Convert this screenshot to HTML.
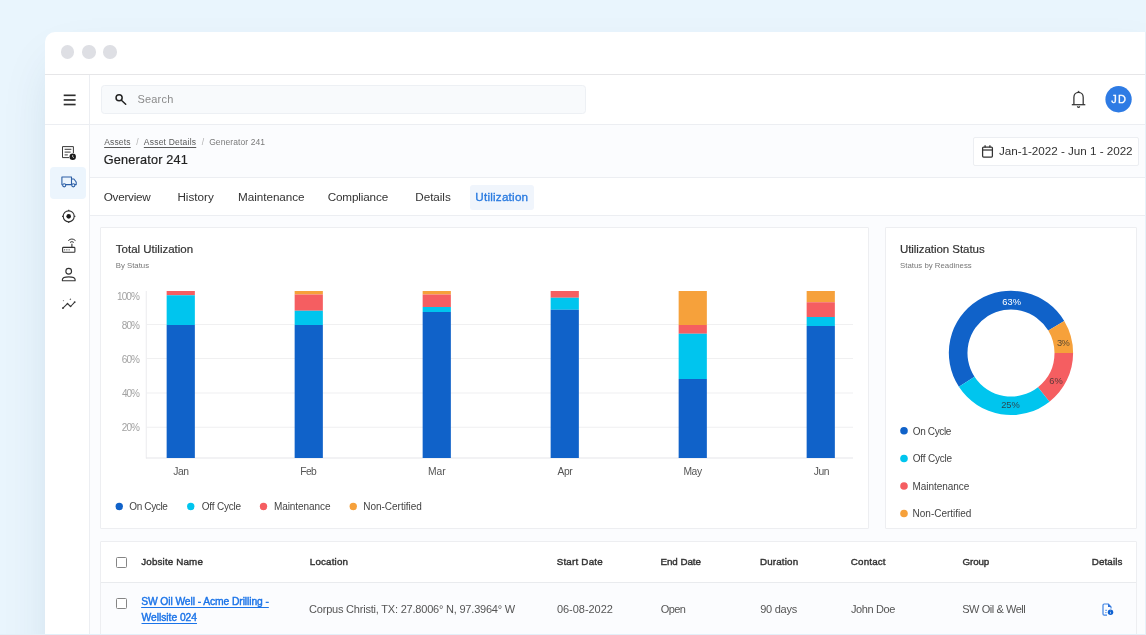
<!DOCTYPE html>
<html lang="en">
<head>
<meta charset="utf-8">
<title>Generator 241 - Utilization</title>
<style>
*{box-sizing:border-box;margin:0;padding:0}
html,body{width:1146px;height:635px;overflow:hidden}
body{position:relative;background:#e9f5fd;font-family:"Liberation Sans",sans-serif;color:#333}
.abs,.t{position:absolute}
.t{white-space:pre}
.texts{position:absolute;left:0;top:0;width:1146px;height:635px;z-index:5;will-change:transform}
.window{position:absolute;left:45px;top:32px;width:1120px;height:640px;background:#fff;border-radius:10px 0 0 0;
 box-shadow:0 25px 50px -12px rgba(20,60,100,.15)}
.edge-r{position:absolute;left:1145px;top:32px;width:1px;height:603px;background:#e6f1f9;z-index:20}
.edge-b{position:absolute;left:0;top:634px;width:1146px;height:1px;background:#e3eff8;z-index:20}
.dot{position:absolute;top:45.2px;width:13.4px;height:13.4px;border-radius:50%;background:#dedfe4}
.hl{position:absolute;height:1px;background:#eceef2}
.vl{position:absolute;width:1px;background:#eceef2}
.band{position:absolute;left:90px;width:1056px;background:#fbfcfe}
.search{position:absolute;left:101px;top:85px;width:484.5px;height:28.5px;background:#f8fafc;border:1px solid #edf0f4;border-radius:3.5px}
.datebtn{position:absolute;left:973px;top:137px;width:166px;height:29px;background:#fff;border:1px solid #eceef2;border-radius:2px}
.tabact{position:absolute;left:470px;top:184.5px;width:64px;height:25.5px;background:#f0f5fc;border-radius:3px}
.navact{position:absolute;left:50px;top:167px;width:35.5px;height:31.5px;background:#ecf5fd;border-radius:4px}
.card{position:absolute;background:#fff;border:1px solid #edeef1;border-radius:1px}
.cb{position:absolute;left:115.75px;width:11px;height:11px;border:1px solid #858585;border-radius:1.5px;background:#fff}
svg{position:absolute;left:0;top:0;overflow:visible}
</style>
</head>
<body>
<div class="window"></div>
<!-- traffic lights -->
<div class="dot" style="left:60.9px"></div><div class="dot" style="left:82.2px"></div><div class="dot" style="left:103.4px"></div>
<!-- bands / backgrounds -->
<div class="band" style="top:125px;height:52px"></div>
<div class="band" style="top:216px;height:419px"></div>
<!-- structural lines -->
<div class="hl" style="left:45px;top:74px;width:1101px;background:#e6e6e8"></div>
<div class="hl" style="left:45px;top:124.2px;width:1101px"></div>
<div class="hl" style="left:90px;top:176.5px;width:1056px"></div>
<div class="hl" style="left:90px;top:215.2px;width:1056px"></div>
<div class="vl" style="left:89px;top:75px;height:560px"></div>
<nav class="navact"></nav>
<!-- header -->
<header>
<div class="search"></div>
</header>
<div class="datebtn"></div>
<div class="tabact"></div>
<!-- cards -->
<section class="card" style="left:100px;top:227px;width:769px;height:302px"></section>
<section class="card" style="left:885px;top:227px;width:252px;height:302px"></section>
<section class="card" style="left:100px;top:541px;width:1037px;height:110px;background:#fbfcfe">
  <div style="position:absolute;left:0;top:0;width:1035px;height:41px;background:#fff;border-bottom:1px solid #e9ebee"></div>
</section>
<div class="cb" style="top:556.7px"></div>
<div class="cb" style="top:598.3px"></div>
<svg width="1146" height="635" viewBox="0 0 1146 635">
<rect x="146.5" y="324" width="706.5" height="1" fill="#f0f0f1"/>
<rect x="146.5" y="358" width="706.5" height="1" fill="#f0f0f1"/>
<rect x="146.5" y="392.5" width="706.5" height="1" fill="#f0f0f1"/>
<rect x="146.5" y="426.75" width="706.5" height="1" fill="#f0f0f1"/>
<rect x="145.75" y="291" width="1" height="167.5" fill="#ececee"/>
<rect x="146" y="457.5" width="707" height="1" fill="#e6e6e9"/>
<rect x="166.65" y="291" width="28.2" height="4.25" fill="#f55e61"/>
<rect x="166.65" y="295.25" width="28.2" height="29.75" fill="#00c5ee"/>
<rect x="166.65" y="325" width="28.2" height="133" fill="#1062c9"/>
<rect x="294.65" y="291" width="28.2" height="3.5" fill="#f6a13b"/>
<rect x="294.65" y="294.5" width="28.2" height="16.25" fill="#f55e61"/>
<rect x="294.65" y="310.75" width="28.2" height="14.25" fill="#00c5ee"/>
<rect x="294.65" y="325" width="28.2" height="133" fill="#1062c9"/>
<rect x="422.65" y="291" width="28.2" height="3.5" fill="#f6a13b"/>
<rect x="422.65" y="294.5" width="28.2" height="12.5" fill="#f55e61"/>
<rect x="422.65" y="307" width="28.2" height="5" fill="#00c5ee"/>
<rect x="422.65" y="312" width="28.2" height="146" fill="#1062c9"/>
<rect x="550.65" y="291" width="28.2" height="6.75" fill="#f55e61"/>
<rect x="550.65" y="297.75" width="28.2" height="12" fill="#00c5ee"/>
<rect x="550.65" y="309.75" width="28.2" height="148.25" fill="#1062c9"/>
<rect x="678.65" y="291" width="28.2" height="34" fill="#f6a13b"/>
<rect x="678.65" y="325" width="28.2" height="8.75" fill="#f55e61"/>
<rect x="678.65" y="333.75" width="28.2" height="45.25" fill="#00c5ee"/>
<rect x="678.65" y="379" width="28.2" height="79" fill="#1062c9"/>
<rect x="806.65" y="291" width="28.2" height="11.25" fill="#f6a13b"/>
<rect x="806.65" y="302.25" width="28.2" height="14.75" fill="#f55e61"/>
<rect x="806.65" y="317" width="28.2" height="9" fill="#00c5ee"/>
<rect x="806.65" y="326" width="28.2" height="132" fill="#1062c9"/>
<circle cx="1118.55" cy="99.25" r="13.15" fill="#2e7be4"/>
<circle cx="119.25" cy="506.5" r="3.7" fill="#1062c9"/>
<circle cx="190.75" cy="506.5" r="3.7" fill="#00c5ee"/>
<circle cx="263.5" cy="506.5" r="3.7" fill="#f55e61"/>
<circle cx="353.25" cy="506.5" r="3.7" fill="#f6a13b"/>
<path d="M958.92 386.82 A62.1 62.1 0 1 1 1064.23 321.02 L1048.29 330.60 A43.5 43.5 0 1 0 974.52 376.69 Z" fill="#1062c9"/>
<path d="M1064.23 321.02 A62.1 62.1 0 0 1 1073.10 353.00 L1054.50 353.00 A43.5 43.5 0 0 0 1048.29 330.60 Z" fill="#f6a13b"/>
<path d="M1073.10 353.00 A62.1 62.1 0 0 1 1049.49 401.73 L1037.96 387.14 A43.5 43.5 0 0 0 1054.50 353.00 Z" fill="#f55e61"/>
<path d="M1049.49 401.73 A62.1 62.1 0 0 1 958.92 386.82 L974.52 376.69 A43.5 43.5 0 0 0 1037.96 387.14 Z" fill="#00c5ee"/>
<circle cx="904" cy="430.75" r="3.8" fill="#1062c9"/>
<circle cx="904" cy="458.5" r="3.8" fill="#00c5ee"/>
<circle cx="904" cy="486" r="3.8" fill="#f55e61"/>
<circle cx="904" cy="513.5" r="3.8" fill="#f6a13b"/>
<!-- hamburger -->
<g fill="#2e2e2e">
<rect x="63.7" y="94.5" width="11.9" height="1.65"/>
<rect x="63.7" y="99.15" width="11.9" height="1.65"/>
<rect x="63.7" y="103.7" width="11.9" height="1.65"/>
</g>
<!-- search -->
<g fill="none" stroke="#222" stroke-width="1.5">
<circle cx="119.1" cy="97.8" r="3.05"/>
<path d="M121.4 100.2 L125.7 104.2" stroke-linecap="round"/>
</g>
<!-- bell -->
<g fill="none" stroke="#333" stroke-width="1.25" stroke-linejoin="round">
<path d="M1071.8 104.7 H1085.3"/>
<path d="M1073.9 104.7 V97.2 A4.65 4.9 0 0 1 1083.2 97.2 V104.7"/>
<path d="M1077.3 106.4 Q1078.55 108.2 1079.8 106.4" stroke-width="1.3"/>
<path d="M1078 91.6 L1078.55 90.9 L1079.1 91.6 Z" fill="#333" stroke-width="0.8"/>
</g>
<!-- calendar -->
<g fill="none" stroke="#333" stroke-width="1.25">
<rect x="982.6" y="147.1" width="9.8" height="10" rx="1"/>
<path d="M982.6 150 H992.4"/>
<path d="M985.1 145.3 V147.4 M989.9 145.3 V147.4"/>
</g>
<!-- sidebar: doc+clock -->
<g fill="none" stroke="#3a3a3a" stroke-width="1">
<path d="M73.4 153 V146.6 H62.5 V157.6 H69"/>
<path d="M64.6 149.3 H71.4 M64.6 152.1 H70.6 M64.6 154.9 H67.8" stroke-width="1"/>
</g>
<circle cx="72.7" cy="156.8" r="3.2" fill="#1a1a1a"/>
<path d="M72.7 155 V156.9 L73.9 157.7" fill="none" stroke="#fff" stroke-width="0.7"/>
<!-- sidebar: truck (active) -->
<g fill="none" stroke="#2c5fa6" stroke-width="1.1" stroke-linejoin="round">
<path d="M62.6 184.6 H61.9 V177 H71.5 V184.6 H65.9"/>
<path d="M71.5 179 H73.9 L76.2 182 V184.6 H74.9"/>
<circle cx="64.2" cy="185.3" r="1.55"/>
<circle cx="73.3" cy="185.3" r="1.55"/>
</g>
<!-- sidebar: target -->
<g fill="none" stroke="#333" stroke-width="1.1">
<circle cx="68.7" cy="216.35" r="5.5"/>
<path d="M68.7 209.7 V211 M68.7 221.7 V223 M62.05 216.35 H63.3 M74.1 216.35 H75.35"/>
</g>
<circle cx="68.7" cy="216.35" r="2.3" fill="#1a1a1a"/>
<!-- sidebar: router -->
<g fill="none" stroke="#333" stroke-width="1.1">
<rect x="62.6" y="247.4" width="12.3" height="4.8" rx="0.8"/>
<path d="M71.9 243.8 V247.4"/>
<path d="M68.3 240.6 Q71.9 237.4 75.5 240.6" stroke-width="1"/>
<path d="M70 242.4 Q71.9 240.8 73.8 242.4" stroke-width="1"/>
</g>
<g fill="#333"><circle cx="64.7" cy="249.8" r="0.6"/><circle cx="66.9" cy="249.8" r="0.6"/><circle cx="69.1" cy="249.8" r="0.6"/></g>
<!-- sidebar: person -->
<g fill="none" stroke="#333" stroke-width="1.15">
<circle cx="68.7" cy="271.3" r="2.85"/>
<path d="M62.4 280.7 V279.6 C62.4 277.6 66.2 276.8 68.75 276.8 C71.3 276.8 75.1 277.6 75.1 279.6 V280.7 Z" stroke-linejoin="round"/>
</g>
<!-- sidebar: insights -->
<g fill="none" stroke="#333" stroke-width="1.1" stroke-linejoin="round">
<path d="M62.9 308.1 L67.5 303.6 L70.6 306.5 L74.7 302.1"/>
</g>
<g fill="#333"><circle cx="62.9" cy="308.1" r="0.95"/><circle cx="67.5" cy="303.6" r="0.8"/><circle cx="70.6" cy="306.5" r="0.8"/><circle cx="74.7" cy="302.1" r="0.95"/>
<path d="M70.3 298.1 L70.6 298.9 L71.4 299.2 L70.6 299.5 L70.3 300.3 L70 299.5 L69.2 299.2 L70 298.9 Z"/>
<path d="M63.4 300 L63.6 300.6 L64.2 300.8 L63.6 301 L63.4 301.6 L63.2 301 L62.6 300.8 L63.2 300.6 Z"/></g>
<!-- details icon -->
<g fill="none" stroke="#3d82e3" stroke-width="1.2" stroke-linejoin="round">
<path d="M1107 615.1 H1104.2 Q1103 615.1 1103 613.9 V605.2 Q1103 604 1104.2 604 H1108.2 L1111 606.9 V608.6"/>
<path d="M1105.3 610.3 H1106.9 M1105.3 612.6 H1106.5" stroke-width="1"/>
</g>
<path d="M1108 603.8 L1111.2 607 H1108 Z" fill="#2a6fd8"/>
<circle cx="1110.5" cy="612.2" r="2.75" fill="#0f62d2"/>
<path d="M1110.5 610.7 V611.1 M1110.5 611.9 V613.7" stroke="#fff" stroke-width="0.6" fill="none"/>

</svg>
<div class="texts">
<span class="t" style="left:137.49px;top:92.00px;font-size:11px;line-height:14px;color:#8b8b8b;letter-spacing:0.184px;">Search</span>
<span class="t" style="left:1111.17px;top:92.00px;font-size:11px;line-height:14px;color:#ffffff;letter-spacing:1.333px;-webkit-text-stroke:0.3px #fff;">JD</span>
<span class="t" style="left:104.16px;top:137.00px;font-size:8.5px;line-height:11px;color:#5a5a5a;letter-spacing:0.174px;text-decoration:underline;text-underline-offset:1.5px;text-decoration-thickness:0.8px;">Assets</span>
<span class="t" style="left:136.31px;top:137.00px;font-size:8.5px;line-height:11px;color:#b0b0b0;letter-spacing:0.225px;">/</span>
<span class="t" style="left:143.83px;top:137.00px;font-size:8.5px;line-height:11px;color:#5a5a5a;letter-spacing:0.215px;text-decoration:underline;text-underline-offset:1.5px;text-decoration-thickness:0.8px;">Asset Details</span>
<span class="t" style="left:201.81px;top:137.00px;font-size:8.5px;line-height:11px;color:#b0b0b0;letter-spacing:0.225px;">/</span>
<span class="t" style="left:209.16px;top:137.00px;font-size:8.5px;line-height:11px;color:#7a7a7a;letter-spacing:0.089px;">Generator 241</span>
<span class="t" style="left:103.79px;top:152.40px;font-size:12.7px;line-height:17px;color:#222;letter-spacing:0.192px;-webkit-text-stroke:0.2px #222;">Generator 241</span>
<span class="t" style="left:998.92px;top:143.30px;font-size:11.7px;line-height:15px;color:#333;letter-spacing:-0.033px;">Jan-1-2022 - Jun 1 - 2022</span>
<span class="t" style="left:103.68px;top:189.40px;font-size:11.7px;line-height:15px;color:#333;letter-spacing:-0.238px;">Overview</span>
<span class="t" style="left:177.41px;top:189.40px;font-size:11.7px;line-height:15px;color:#333;letter-spacing:0.004px;">History</span>
<span class="t" style="left:238.10px;top:189.40px;font-size:11.7px;line-height:15px;color:#333;letter-spacing:-0.049px;">Maintenance</span>
<span class="t" style="left:327.72px;top:189.40px;font-size:11.7px;line-height:15px;color:#333;letter-spacing:-0.145px;">Compliance</span>
<span class="t" style="left:415.31px;top:189.40px;font-size:11.7px;line-height:15px;color:#333;letter-spacing:-0.050px;">Details</span>
<span class="t" style="left:475.32px;top:189.40px;font-size:11.7px;line-height:15px;color:#2a7be0;letter-spacing:0.211px;-webkit-text-stroke:0.35px #2a7be0;">Utilization</span>
<span class="t" style="left:115.87px;top:242.00px;font-size:11.5px;line-height:15px;color:#333;letter-spacing:-0.006px;-webkit-text-stroke:0.2px #333;">Total Utilization</span>
<span class="t" style="left:115.84px;top:260.60px;font-size:7.8px;line-height:10px;color:#777;letter-spacing:-0.017px;">By Status</span>
<span class="t" style="left:117.08px;top:289.70px;font-size:10px;line-height:13px;color:#a2a2a2;letter-spacing:-0.937px;">100%</span>
<span class="t" style="left:121.85px;top:318.60px;font-size:10px;line-height:13px;color:#a2a2a2;letter-spacing:-0.974px;">80%</span>
<span class="t" style="left:121.76px;top:352.70px;font-size:10px;line-height:13px;color:#a2a2a2;letter-spacing:-0.924px;">60%</span>
<span class="t" style="left:121.97px;top:386.60px;font-size:10px;line-height:13px;color:#a2a2a2;letter-spacing:-1.015px;">40%</span>
<span class="t" style="left:121.87px;top:420.90px;font-size:10px;line-height:13px;color:#a2a2a2;letter-spacing:-0.973px;">20%</span>
<span class="t" style="left:173.28px;top:465.00px;font-size:10.3px;line-height:13px;color:#555;letter-spacing:-0.412px;">Jan</span>
<span class="t" style="left:300.37px;top:465.00px;font-size:10.3px;line-height:13px;color:#555;letter-spacing:-0.695px;">Feb</span>
<span class="t" style="left:427.94px;top:465.00px;font-size:10.3px;line-height:13px;color:#555;letter-spacing:0.018px;">Mar</span>
<span class="t" style="left:557.57px;top:465.00px;font-size:10.3px;line-height:13px;color:#555;letter-spacing:-0.487px;">Apr</span>
<span class="t" style="left:683.42px;top:465.00px;font-size:10.3px;line-height:13px;color:#555;letter-spacing:-0.404px;">May</span>
<span class="t" style="left:813.81px;top:465.00px;font-size:10.3px;line-height:13px;color:#555;letter-spacing:-0.438px;">Jun</span>
<span class="t" style="left:129.26px;top:500.00px;font-size:10px;line-height:13px;color:#444;letter-spacing:-0.354px;">On Cycle</span>
<span class="t" style="left:201.80px;top:500.00px;font-size:10px;line-height:13px;color:#444;letter-spacing:-0.202px;">Off Cycle</span>
<span class="t" style="left:273.95px;top:500.00px;font-size:10px;line-height:13px;color:#444;letter-spacing:-0.066px;">Maintenance</span>
<span class="t" style="left:363.29px;top:500.00px;font-size:10px;line-height:13px;color:#444;letter-spacing:-0.024px;">Non-Certified</span>
<span class="t" style="left:899.88px;top:242.00px;font-size:11.5px;line-height:15px;color:#333;letter-spacing:-0.052px;-webkit-text-stroke:0.2px #333;">Utilization Status</span>
<span class="t" style="left:900.05px;top:260.60px;font-size:7.8px;line-height:10px;color:#777;letter-spacing:0.011px;">Status by Readiness</span>
<span class="t" style="left:1002.21px;top:296.30px;font-size:9.3px;line-height:12px;color:#ffffff;letter-spacing:0.044px;">63%</span>
<span class="t" style="left:1056.98px;top:337.30px;font-size:9.3px;line-height:12px;color:#5a4a33;letter-spacing:-0.553px;">3%</span>
<span class="t" style="left:1049.21px;top:375.30px;font-size:9.3px;line-height:12px;color:#5a3a3a;letter-spacing:0.192px;">6%</span>
<span class="t" style="left:1001.29px;top:398.70px;font-size:9.3px;line-height:12px;color:#2a4a55;letter-spacing:-0.116px;">25%</span>
<span class="t" style="left:912.80px;top:424.80px;font-size:10px;line-height:13px;color:#444;letter-spacing:-0.376px;">On Cycle</span>
<span class="t" style="left:912.80px;top:452.00px;font-size:10px;line-height:13px;color:#444;letter-spacing:-0.212px;">Off Cycle</span>
<span class="t" style="left:912.53px;top:479.50px;font-size:10px;line-height:13px;color:#444;letter-spacing:-0.051px;">Maintenance</span>
<span class="t" style="left:912.59px;top:507.00px;font-size:10px;line-height:13px;color:#444;letter-spacing:-0.008px;">Non-Certified</span>
<span class="t" style="left:141.34px;top:555.40px;font-size:9.8px;line-height:13px;color:#333;letter-spacing:0.147px;-webkit-text-stroke:0.4px #333;">Jobsite Name</span>
<span class="t" style="left:309.85px;top:555.40px;font-size:9.8px;line-height:13px;color:#333;letter-spacing:0.158px;-webkit-text-stroke:0.4px #333;">Location</span>
<span class="t" style="left:556.68px;top:555.40px;font-size:9.8px;line-height:13px;color:#333;letter-spacing:0.211px;-webkit-text-stroke:0.4px #333;">Start Date</span>
<span class="t" style="left:660.51px;top:555.40px;font-size:9.8px;line-height:13px;color:#333;letter-spacing:-0.064px;-webkit-text-stroke:0.4px #333;">End Date</span>
<span class="t" style="left:760.05px;top:555.40px;font-size:9.8px;line-height:13px;color:#333;letter-spacing:0.145px;-webkit-text-stroke:0.4px #333;">Duration</span>
<span class="t" style="left:850.80px;top:555.40px;font-size:9.8px;line-height:13px;color:#333;letter-spacing:0.170px;-webkit-text-stroke:0.4px #333;">Contact</span>
<span class="t" style="left:962.61px;top:555.40px;font-size:9.8px;line-height:13px;color:#333;letter-spacing:-0.182px;-webkit-text-stroke:0.4px #333;">Group</span>
<span class="t" style="left:1091.85px;top:555.40px;font-size:9.8px;line-height:13px;color:#333;letter-spacing:0.094px;-webkit-text-stroke:0.4px #333;">Details</span>
<span class="t" style="left:141.15px;top:595.20px;font-size:10.3px;line-height:13px;color:#1a73e8;letter-spacing:-0.089px;-webkit-text-stroke:0.4px #1a73e8;text-decoration:underline;text-underline-offset:1.5px;">SW Oil Well - Acme Drilling -</span>
<span class="t" style="left:141.53px;top:610.70px;font-size:10.3px;line-height:13px;color:#1a73e8;letter-spacing:-0.037px;-webkit-text-stroke:0.4px #1a73e8;text-decoration:underline;text-underline-offset:1.5px;">Wellsite 024</span>
<span class="t" style="left:309.05px;top:602.40px;font-size:11px;line-height:14px;color:#555;letter-spacing:-0.207px;">Corpus Christi, TX: 27.8006° N, 97.3964° W</span>
<span class="t" style="left:556.93px;top:602.40px;font-size:11px;line-height:14px;color:#555;letter-spacing:-0.031px;">06-08-2022</span>
<span class="t" style="left:660.70px;top:602.40px;font-size:11px;line-height:14px;color:#555;letter-spacing:-0.547px;">Open</span>
<span class="t" style="left:760.27px;top:602.40px;font-size:11px;line-height:14px;color:#555;letter-spacing:-0.270px;">90 days</span>
<span class="t" style="left:850.93px;top:602.40px;font-size:11px;line-height:14px;color:#555;letter-spacing:-0.367px;">John Doe</span>
<span class="t" style="left:962.19px;top:602.40px;font-size:11px;line-height:14px;color:#555;letter-spacing:-0.440px;">SW Oil &amp; Well</span>
</div>
<div class="edge-r"></div>
<div class="edge-b"></div>
</body>
</html>
